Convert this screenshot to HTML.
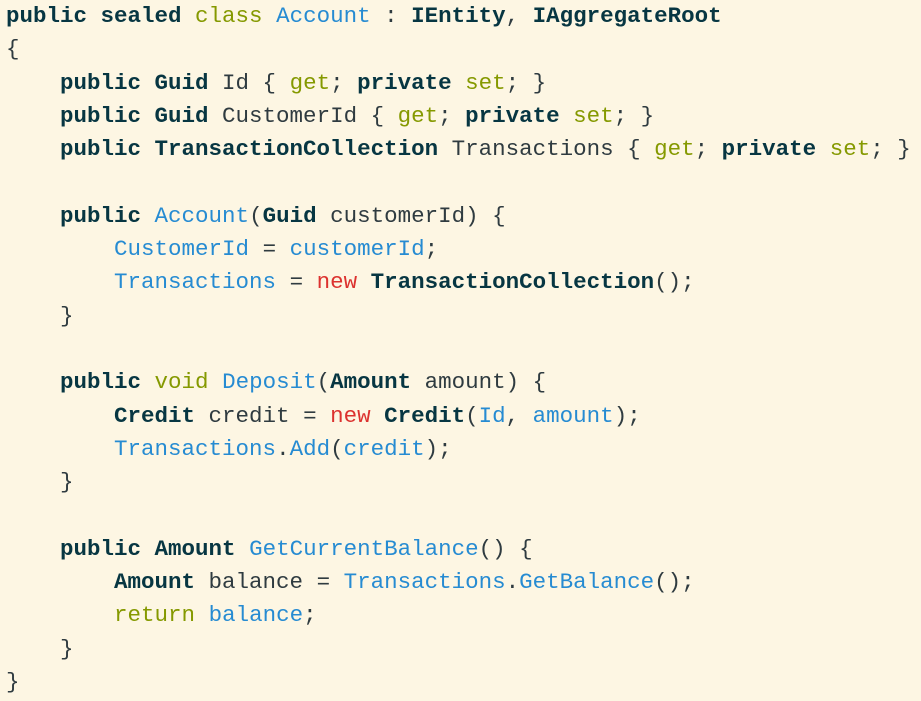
<!DOCTYPE html>
<html><head><meta charset="utf-8"><style>
html,body{margin:0;padding:0;background:#fdf6e3;width:921px;height:701px;overflow:hidden}
pre{margin:0;position:absolute;left:6px;top:0px;font-family:"Liberation Mono",monospace;font-size:22.5px;line-height:33.3px;color:#2f3b40;white-space:pre}
b{color:#073642;font-weight:bold}
.g{color:#859900}.c{color:#268bd2}.r{color:#dc322f}
</style></head><body><pre><b>public sealed</b> <span class="g">class</span> <span class="c">Account</span> : <b>IEntity</b>, <b>IAggregateRoot</b>
{
    <b>public Guid</b> Id { <span class="g">get</span>; <b>private</b> <span class="g">set</span>; }
    <b>public Guid</b> CustomerId { <span class="g">get</span>; <b>private</b> <span class="g">set</span>; }
    <b>public TransactionCollection</b> Transactions { <span class="g">get</span>; <b>private</b> <span class="g">set</span>; }

    <b>public</b> <span class="c">Account</span>(<b>Guid</b> customerId) {
        <span class="c">CustomerId</span> = <span class="c">customerId</span>;
        <span class="c">Transactions</span> = <span class="r">new</span> <b>TransactionCollection</b>();
    }

    <b>public</b> <span class="g">void</span> <span class="c">Deposit</span>(<b>Amount</b> amount) {
        <b>Credit</b> credit = <span class="r">new</span> <b>Credit</b>(<span class="c">Id</span>, <span class="c">amount</span>);
        <span class="c">Transactions</span>.<span class="c">Add</span>(<span class="c">credit</span>);
    }

    <b>public Amount</b> <span class="c">GetCurrentBalance</span>() {
        <b>Amount</b> balance = <span class="c">Transactions</span>.<span class="c">GetBalance</span>();
        <span class="g">return</span> <span class="c">balance</span>;
    }
}</pre></body></html>
